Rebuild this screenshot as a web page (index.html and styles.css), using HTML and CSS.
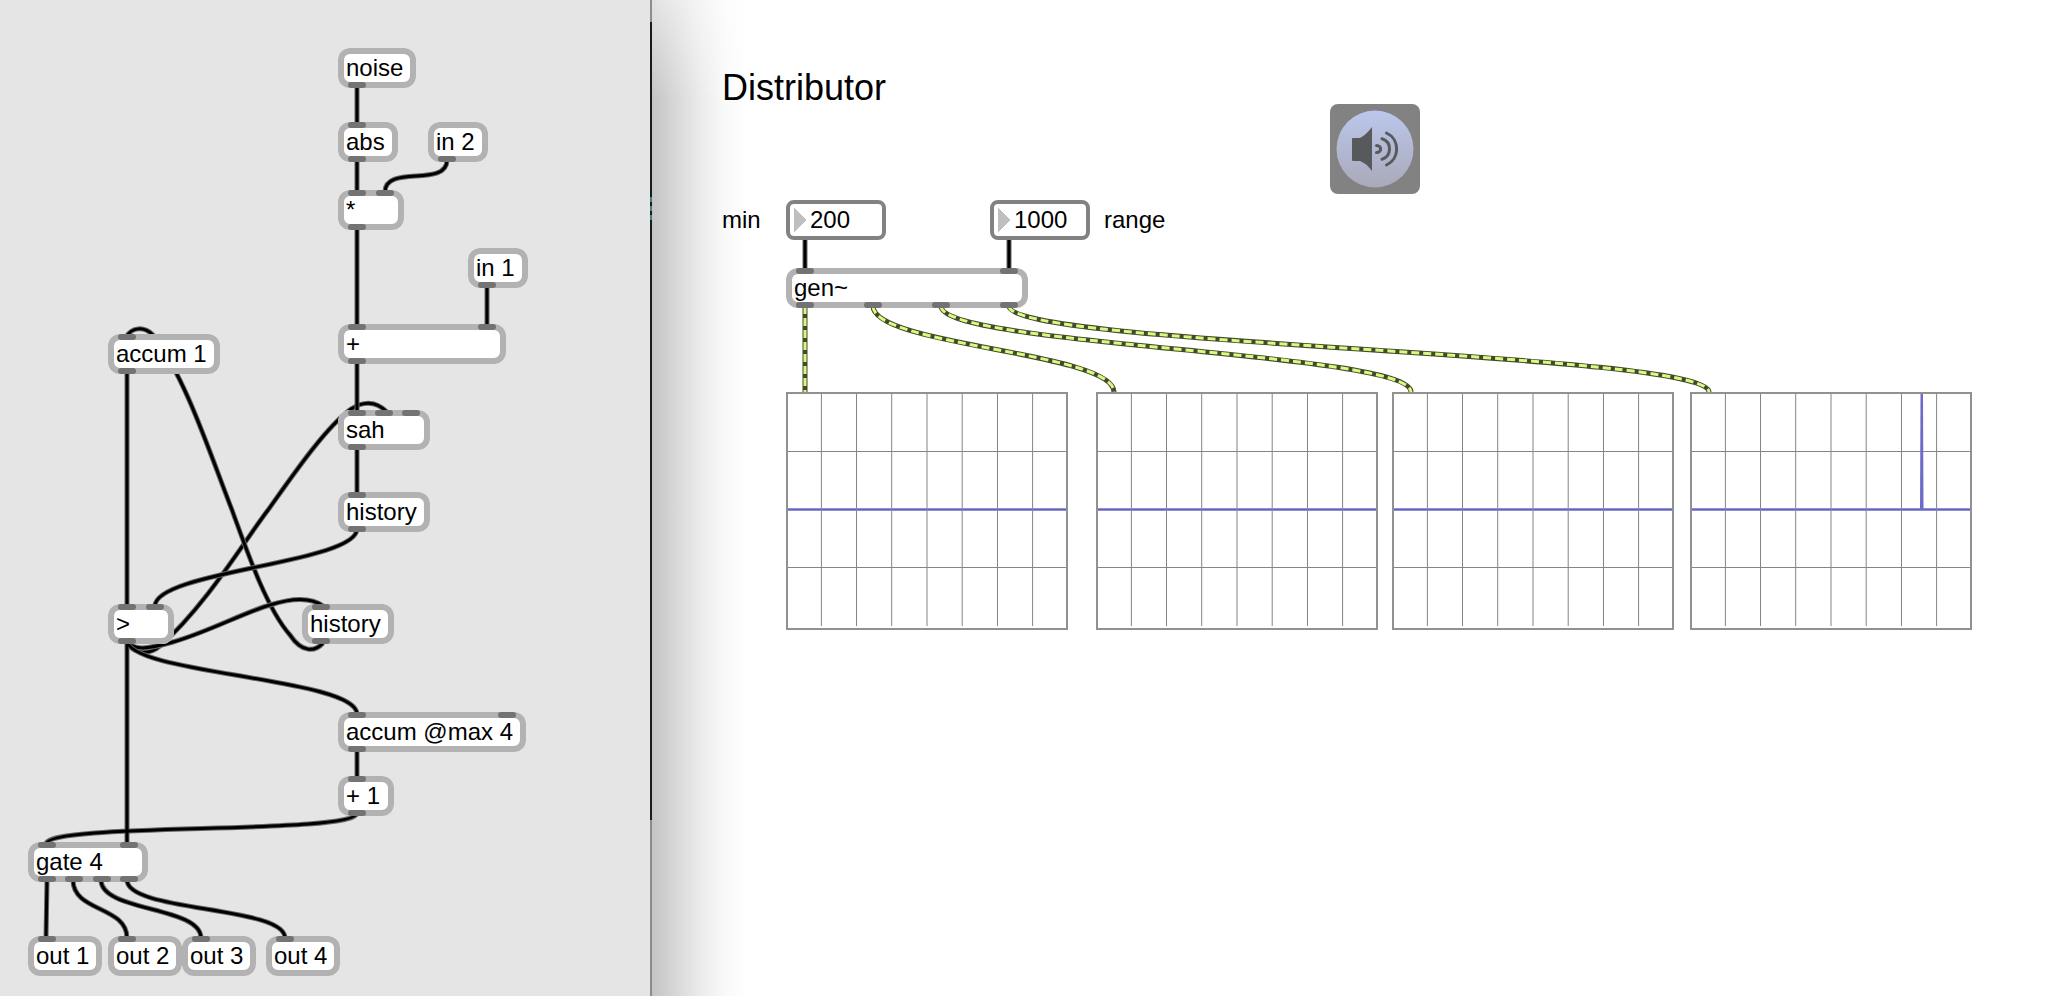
FILE: index.html
```html
<!DOCTYPE html>
<html lang="en">
<head>
<meta charset="utf-8">
<title>Distributor</title>
<link rel="stylesheet" href="styles.css">
</head>
<body>
<main class="workspace">
  <section class="pane pane-gen" aria-label="gen patcher">
    <svg class="cords" aria-hidden="true">
      <defs>
        <path id="cord-sah" d="M126 641C133 655 150 655 160 646C205 607 245 540 268 510C293 475 325 428 351 409C362 402 375 400 387 412"/>
        <path id="cord-history" d="M126 641C133 650 145 650 173 642C208 632 245 612 270 605C292 598 311 597 323 606"/>
        <path id="cord-accum" d="M126 337C132 327 144 326 153 335C185 377 208 448 232 510C250 560 268 610 290 635C302 653 315 652 323 643"/>
        <g id="gen-cords">
          <path d="M357 84V124M357 158V192M357 226V326M357 360V412M357 446V494M487 284V326M127 370V606M127 640V844M357 748V778"/>
          <path d="M447 160C447 188 385 164 385 192"/>
          <path d="M357 529C357 563 155 571 155 606"/>
          <path d="M127 640C127 674 357 678 357 714"/>
          <path d="M357 813C357 835 46 822 46 844"/>
          <path d="M47 880L46 938"/>
          <path d="M73 880C73 912 127 906 127 938"/>
          <path d="M101 880C101 912 201 906 201 938"/>
          <path d="M127 880C127 912 285 906 285 938"/>
        </g>
      </defs>
      <use href="#cord-sah" class="cord-edge"/>
      <use href="#cord-sah" class="cord-core"/>
      <use href="#cord-accum" class="cord-edge"/>
      <use href="#cord-accum" class="cord-core"/>
      <use href="#cord-history" class="cord-edge"/>
      <use href="#cord-history" class="cord-core"/>
      <use href="#gen-cords" class="cord-edge"/>
      <use href="#gen-cords" class="cord-core"/>
    </svg>

    <div class="node noise">noise<span class="outlets"><i></i></span></div>
    <div class="node abs"><span class="inlets"><i></i></span>abs<span class="outlets"><i></i></span></div>
    <div class="node in-2">in 2<span class="outlets"><i></i></span></div>
    <div class="node times"><span class="inlets"><i></i><i></i></span>*<span class="outlets"><i></i></span></div>
    <div class="node in-1">in 1<span class="outlets"><i></i></span></div>
    <div class="node plus"><span class="inlets"><i></i><i></i></span>+<span class="outlets"><i></i></span></div>
    <div class="node accum"><span class="inlets"><i></i></span>accum 1<span class="outlets"><i></i></span></div>
    <div class="node sah"><span class="inlets"><i></i><i></i><i></i></span>sah<span class="outlets"><i></i></span></div>
    <div class="node history-a"><span class="inlets"><i></i></span>history<span class="outlets"><i></i></span></div>
    <div class="node greater"><span class="inlets"><i></i><i></i></span>&gt;<span class="outlets"><i></i></span></div>
    <div class="node history-b"><span class="inlets"><i></i></span>history<span class="outlets"><i></i></span></div>
    <div class="node accum-max"><span class="inlets"><i></i><i></i></span>accum @max 4<span class="outlets"><i></i></span></div>
    <div class="node plus-one"><span class="inlets"><i></i></span>+ 1<span class="outlets"><i></i></span></div>
    <div class="node gate"><span class="inlets"><i></i><i></i></span>gate 4<span class="outlets"><i></i><i></i><i></i><i></i></span></div>
    <div class="node out-1"><span class="inlets"><i></i></span>out 1</div>
    <div class="node out-2"><span class="inlets"><i></i></span>out 2</div>
    <div class="node out-3"><span class="inlets"><i></i></span>out 3</div>
    <div class="node out-4"><span class="inlets"><i></i></span>out 4</div>
  </section>

  <section class="pane pane-main" aria-label="main patcher">
    <h1 class="title">Distributor</h1>

    <button class="audio" type="button" aria-label="Toggle audio">
      <svg width="90" height="90" viewBox="0 0 90 90" aria-hidden="true">
        <defs>
          <linearGradient id="dome" x1="0" y1="0" x2="0" y2="1">
            <stop offset="0" stop-color="#bcc7ec"/>
            <stop offset="1" stop-color="#a9a9b9"/>
          </linearGradient>
        </defs>
        <circle cx="45" cy="45" r="38.5" fill="url(#dome)"/>
        <path d="M23 34H30Q36 31 42 23V67Q36 59 30 57H23Q22 57 22 56V35Q22 34 23 34Z" fill="#58595b"/>
        <path d="M46.500 41.500C52 41.500 52 48.500 46.500 48.500M52 34.800C62 38 62 52 52 55.200M56.500 29C70 35 70 55 56.500 61" fill="none" stroke="#58595b" stroke-width="3" stroke-linecap="round"/>
      </svg>
    </button>

    <label class="caption caption-min" for="min">min</label>
    <input class="number number-min" id="min" type="text" inputmode="numeric" value="200">
    <input class="number number-range" id="range" type="text" inputmode="numeric" value="1000">
    <label class="caption caption-range" for="range">range</label>

    <svg class="cords" aria-hidden="true">
      <defs>
        <path id="number-cords" d="M155 240V270M359 240V270"/>
        <g id="signal-cords">
          <path d="M155 306V392"/>
          <path d="M223 306C223 346 464 352 464 392"/>
          <path d="M291 306C291 346 761 352 761 392"/>
          <path d="M359 306C359 346 1059 352 1059 392"/>
        </g>
      </defs>
      <use href="#number-cords" class="cord-edge"/>
      <use href="#number-cords" class="cord-core"/>
      <use href="#signal-cords" class="signal-edge"/>
      <use href="#signal-cords" class="signal-core"/>
    </svg>

    <div class="node gen"><span class="inlets"><i></i><i></i></span>gen~<span class="outlets"><i></i><i></i><i></i><i></i></span></div>

    <svg class="scope scope-1" viewBox="0 0 282 238" role="img" aria-label="Scope 1">
      <defs>
        <g id="scope-grid">
          <rect x="1" y="1" width="280" height="236" fill="#fff" stroke="#919191" stroke-width="2"/>
          <path d="M35.400 2V234M70.500 2V234M105.700 2V234M141 2V234M176.200 2V234M211.500 2V234M246.600 2V234M2 59.500H280M2 175.500H280" fill="none" stroke="#858585"/>
          <path d="M2 117.500H280" stroke="#8f8fd6" stroke-width="3"/>
          <path d="M2 117.500H280" stroke="#6464bc"/>
        </g>
      </defs>
      <use href="#scope-grid"/>
    </svg>
    <svg class="scope scope-2" viewBox="0 0 282 238" role="img" aria-label="Scope 2"><use href="#scope-grid"/></svg>
    <svg class="scope scope-3" viewBox="0 0 282 238" role="img" aria-label="Scope 3"><use href="#scope-grid"/></svg>
    <svg class="scope scope-4" viewBox="0 0 282 238" role="img" aria-label="Scope 4">
      <use href="#scope-grid"/>
      <path d="M230.500 2H233L233.500 118H230Z" fill="#6c6cc8"/>
    </svg>
  </section>
</main>
</body>
</html>
```

FILE: styles.css
```css
* {
  box-sizing: border-box;
}

body {
  margin: 0;
  background: #fff;
  color: #000;
  font: 24px/40px "Liberation Sans", Arial, sans-serif;
}

.workspace {
  display: grid;
  grid-template-columns: minmax(540px, 13fr) 28fr;
  min-height: 100vh;
}

.pane {
  position: relative;
  min-height: 992px;
}

.pane-gen {
  background: #e5e5e5;
}

/* window edge and its drop shadow */
.pane-main {
  background: linear-gradient(to right, #c2c2c2, #d6d6d6 24px, #ebebeb 50px, #f9f9f9 74px, #fff 98px);
}

.pane-main::before {
  content: "";
  position: absolute;
  inset: 0 auto 0 0;
  width: 2px;
  background:
    repeating-linear-gradient(#3f7f80 0 5px, #1a1a1a 5px 9px) 0 197px / 2px 23px no-repeat,
    linear-gradient(#8c8c8c 22px, #1a1a1a 22px, #1a1a1a 820px, #8c8c8c 820px);
}

.pane-main::after {
  content: "";
  position: absolute;
  inset: 0 auto auto 2px;
  width: 98px;
  height: 100px;
  background: linear-gradient(rgba(255, 255, 255, 0.5), rgba(255, 255, 255, 0));
}

.cords {
  position: absolute;
  inset: 0;
  width: 100%;
  height: 100%;
  fill: none;
}

.cord-edge {
  stroke: #666;
  stroke-width: 5px;
}

.cord-core {
  stroke: #000;
  stroke-width: 3px;
}

.signal-edge {
  stroke: #434a2a;
  stroke-width: 5px;
}

.signal-core {
  stroke: #d8fa80;
  stroke-width: 3px;
  stroke-dasharray: 8 4;
}

.node {
  position: absolute;
  height: 40px;
  padding-left: 8px;
  border-radius: 12px;
  background: #fff;
  box-shadow: inset 0 0 0 6px #b2b2b2;
  white-space: nowrap;
}

.inlets,
.outlets {
  position: absolute;
  left: 10px;
  right: 10px;
  display: flex;
  justify-content: space-between;
}

.inlets {
  top: 0;
}

.outlets {
  bottom: 0;
}

.inlets i,
.outlets i {
  width: 18px;
  height: 6px;
  border-radius: 3px;
  background: #737373;
}

.noise { left: 338px; top: 48px; width: 78px; }
.abs { left: 338px; top: 122px; width: 60px; }
.in-2 { left: 428px; top: 122px; width: 60px; }
.times { left: 338px; top: 190px; width: 66px; }
.in-1 { left: 468px; top: 248px; width: 60px; }
.plus { left: 338px; top: 324px; width: 168px; }
.accum { left: 108px; top: 334px; width: 112px; }
.sah { left: 338px; top: 410px; width: 92px; }
.history-a { left: 338px; top: 492px; width: 92px; }
.greater { left: 108px; top: 604px; width: 66px; }
.history-b { left: 302px; top: 604px; width: 92px; }
.accum-max { left: 338px; top: 712px; width: 188px; }
.plus-one { left: 338px; top: 776px; width: 56px; }
.gate { left: 28px; top: 842px; width: 120px; }
.out-1 { left: 28px; top: 936px; width: 74px; }
.out-2 { left: 108px; top: 936px; width: 74px; }
.out-3 { left: 182px; top: 936px; width: 74px; }
.out-4 { left: 266px; top: 936px; width: 74px; }
.gen { left: 136px; top: 268px; width: 242px; }

.title {
  position: absolute;
  z-index: 1;
  left: 72px;
  top: 68px;
  margin: 0;
  font-size: 36px;
  font-weight: 400;
  line-height: 40px;
}

.audio {
  position: absolute;
  left: 680px;
  top: 104px;
  width: 90px;
  height: 90px;
  padding: 0;
  border: 0;
  border-radius: 8px;
  background: #828282;
}

.audio svg {
  display: block;
}

.caption {
  position: absolute;
  top: 200px;
}

.caption-min {
  left: 72px;
}

.caption-range {
  left: 454px;
}

.number {
  position: absolute;
  top: 200px;
  width: 100px;
  height: 40px;
  padding: 0 0 0 20px;
  border: 4px solid #828282;
  border-radius: 8px;
  background: conic-gradient(from 225deg at 100% 50%, #bfbfbf 90deg, transparent 90deg) 4px 4px / 12px 24px no-repeat #fff;
  color: inherit;
  font: inherit;
  line-height: 32px;
}

.number-min {
  left: 136px;
}

.number-range {
  left: 340px;
}

.scope {
  position: absolute;
  top: 392px;
  width: 282px;
  height: 238px;
}

.scope-1 { left: 136px; }
.scope-2 { left: 446px; }
.scope-3 { left: 742px; }
.scope-4 { left: 1040px; }
```
